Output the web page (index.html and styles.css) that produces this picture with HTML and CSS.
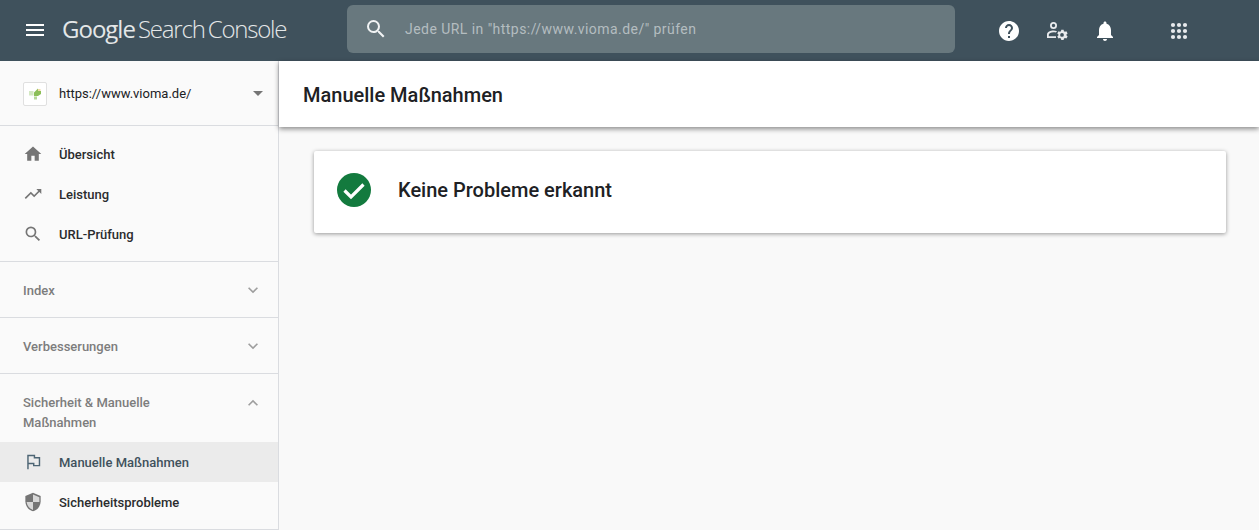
FILE: index.html
```html
<!DOCTYPE html>
<html lang="de">
<head>
<meta charset="utf-8">
<title>Manuelle Maßnahmen</title>
<link rel="stylesheet" href="styles.css">
</head>
<body>
<header class="topbar">
  <div class="brand">
    <svg class="menu" viewBox="0 0 24 24"><path d="M3 18h18v-2H3v2zm0-5h18v-2H3v2zm0-7v2h18V6H3z"/></svg>
    <div class="logo"><span class="logo-g">Google</span> <span class="logo-s">Search</span> <span class="logo-c">Console</span></div>
  </div>
  <div class="search">
    <svg class="search-icon" viewBox="0 0 24 24"><path d="M15.5 14h-.79l-.28-.27A6.47 6.47 0 0 0 16 9.5 6.5 6.5 0 1 0 9.5 16c1.61 0 3.09-.59 4.23-1.57l.27.28v.79l5 4.99L20.49 19l-4.99-5zm-6 0C7.01 14 5 11.99 5 9.5S7.01 5 9.5 5 14 7.01 14 9.5 11.99 14 9.5 14z"/></svg>
    <span class="search-text">Jede URL in "https://www.vioma.de/" prüfen</span>
  </div>
  <div class="actions">
    <svg class="act" viewBox="0 0 24 24"><path d="M12 2C6.48 2 2 6.48 2 12s4.48 10 10 10 10-4.48 10-10S17.52 2 12 2zm1 17h-2v-2h2v2zm2.07-7.75l-.9.92C13.45 12.9 13 13.5 13 15h-2v-.5c0-1.1.45-2.1 1.17-2.83l1.24-1.26c.37-.36.59-.86.59-1.41 0-1.1-.9-2-2-2s-2 .9-2 2H8c0-2.21 1.79-4 4-4s4 1.79 4 4c0 .88-.36 1.68-.93 2.25z"/></svg>
    <svg class="act act-dim" viewBox="0 0 24 24"><g transform="translate(-2 -1)"><path d="M10.5 4a3.500 3.500 0 1 0 0 7 3.500 3.500 0 0 0 0-7zm0 1.800a1.700 1.700 0 1 1 0 3.400 1.700 1.700 0 0 1 0-3.400zM10.500 12.500c-2.900 0-6.500 1.300-6.500 4V20h9v-1.800H5.800v-1.700c0-1 2.200-2.200 4.700-2.200.7 0 1.500.1 2.200.3l1.400-1.400c-1.300-.5-2.600-.7-3.600-.7z"/></g><g transform="translate(-5.500 -5.500) scale(1.250)"><path d="M21.600 16.600l.9-.7-1-1.700-1.100.4c-.3-.2-.5-.4-.9-.5l-.2-1.100h-1.900l-.2 1.100c-.3.1-.6.3-.9.5l-1.100-.4-1 1.700.9.700v1l-.9.7 1 1.700 1.100-.4c.3.2.6.4.9.5l.2 1.100h1.900l.2-1.100c.4-.1.6-.3.9-.5l1.100.4 1-1.700-.9-.7c.1-.3.1-.7 0-1zM18 18.600a1.500 1.500 0 1 1 0-3 1.500 1.500 0 0 1 0 3z"/></g></svg>
    <svg class="act" viewBox="0 0 24 24"><path d="M12 22c1.100 0 2-.9 2-2h-4c0 1.100.9 2 2 2zm6-6v-5c0-3.070-1.630-5.640-4.500-6.320V4c0-.83-.67-1.500-1.500-1.500s-1.500.67-1.500 1.500v.68C7.640 5.360 6 7.920 6 11v5l-2 2v1h16v-1l-2-2z"/></svg>
    <svg class="act act-apps act-dim" viewBox="0 0 24 24"><circle cx="6" cy="6" r="2.100"/><circle cx="12" cy="6" r="2.100"/><circle cx="18" cy="6" r="2.100"/><circle cx="6" cy="12" r="2.100"/><circle cx="12" cy="12" r="2.100"/><circle cx="18" cy="12" r="2.100"/><circle cx="6" cy="18" r="2.100"/><circle cx="12" cy="18" r="2.100"/><circle cx="18" cy="18" r="2.100"/></svg>
  </div>
</header>
<div class="layout">
  <aside class="sidebar">
    <div class="site">
      <div class="favicon">
        <svg viewBox="0 0 22 22"><rect x="5" y="8" width="4.500" height="4.500" fill="#d3e8c2"/><path d="M10 13V9.500L14 5.500V8h3v3l-3 2z" fill="#8cbf58"/><rect x="14" y="6" width="2.500" height="2" fill="#f2dca8"/><rect x="10" y="13.500" width="3" height="3" fill="#b7d99a"/></svg>
      </div>
      <span class="site-url">https://www.vioma.de/</span>
      <span class="caret"></span>
    </div>
    <nav class="group group-top">
      <a class="item"><svg class="icon" viewBox="0 0 24 24"><path d="M10 20v-6h4v6h5v-8h3L12 3 2 12h3v8z"/></svg><span>Übersicht</span></a>
      <a class="item"><svg class="icon" viewBox="0 0 24 24"><path d="M16 6l2.290 2.290-4.880 4.880-4-4L2 16.590 3.410 18l6-6 4 4 6.300-6.290L22 12V6z"/></svg><span>Leistung</span></a>
      <a class="item"><svg class="icon" viewBox="0 0 24 24"><path d="M15.500 14h-.79l-.28-.27A6.470 6.470 0 0 0 16 9.500 6.500 6.500 0 1 0 9.500 16c1.610 0 3.090-.59 4.230-1.570l.27.28v.79l5 4.990L20.490 19l-4.990-5zm-6 0C7.010 14 5 11.990 5 9.500S7.010 5 9.500 5 14 7.010 14 9.500 11.990 14 9.500 14z"/></svg><span>URL-Prüfung</span></a>
    </nav>
    <div class="group head-row">
      <span class="head-label">Index</span>
      <svg class="chev" viewBox="0 0 24 24"><path d="M7.410 8.590L12 13.170l4.590-4.580L18 10l-6 6-6-6z"/></svg>
    </div>
    <div class="group head-row">
      <span class="head-label">Verbesserungen</span>
      <svg class="chev" viewBox="0 0 24 24"><path d="M7.410 8.590L12 13.170l4.590-4.580L18 10l-6 6-6-6z"/></svg>
    </div>
    <div class="group group-open">
      <div class="head-open">
        <span class="head-label head-wrap">Sicherheit &amp; Manuelle Maßnahmen</span>
        <svg class="chev" viewBox="0 0 24 24"><path d="M12 8l-6 6 1.410 1.410L12 10.830l4.590 4.580L18 14z"/></svg>
      </div>
      <a class="item active"><svg class="icon icon-flag" viewBox="0 0 24 24"><path d="M5 22V3h9v3h7v11h-8v-3H5"/></svg><span>Manuelle Maßnahmen</span></a>
      <a class="item"><svg class="icon icon-shield" viewBox="0 0 24 24"><path d="M12 1L3 5v6c0 5.550 3.840 10.740 9 12 5.160-1.260 9-6.450 9-12V5z"/><path class="shield-light" d="M12 3.100V12h7.500V6.300zM12 12v9.300C8 20 5.100 16.400 4.500 12z"/></svg><span>Sicherheitsprobleme</span></a>
    </div>
  </aside>
  <main class="main">
    <div class="page-head"><h1 class="page-title">Manuelle Maßnahmen</h1></div>
    <section class="card">
      <svg class="ok" viewBox="0 0 34 34"><circle cx="17" cy="17" r="17" fill="#137a3e"/><path d="M7.500 17.500l6.500 6.500L26.500 11.500" fill="none" stroke="#fff" stroke-width="3.200"/></svg>
      <h2 class="card-title">Keine Probleme erkannt</h2>
    </section>
  </main>
</div>
</body>
</html>
```

FILE: styles.css
```css
* { box-sizing: border-box; }
html, body { height: 100%; }
body {
  margin: 0;
  height: 530px;
  overflow: hidden;
  background: #f9f9f9;
  font-family: Roboto, "Liberation Sans", sans-serif;
  color: #202124;
}
.topbar {
  height: 61px;
  background: #3f515c;
  display: flex;
  align-items: center;
}
.brand {
  width: 347px;
  display: flex;
  align-items: center;
  padding-left: 23px;
  padding-bottom: 4px;
  flex: none;
}
.menu { width: 24px; height: 24px; fill: #fff; flex: none; margin-top: 3px; }
.logo {
  margin-left: 15px;
  color: #e4e7e8;
  font-family: "Open Sans", sans-serif;
  font-size: 24px;
  letter-spacing: -1.2px;
  word-spacing: -2px;
  white-space: nowrap;
  font-weight: 400;
}
.logo-g { font-size: 24px; letter-spacing: -1px; }
.logo-s, .logo-c { font-weight: 300; }
.search {
  width: 608px;
  height: 48px;
  margin-bottom: 4px;
  background: #68787e;
  border-radius: 6px;
  display: flex;
  align-items: center;
  padding-left: 17px;
  flex: none;
}
.search-icon { width: 24px; height: 24px; fill: #f1f3f4; flex: none; }
.search-text {
  margin-left: 17px;
  color: #b4bdc0;
  font-size: 14px;
  letter-spacing: .45px;
}
.actions {
  display: flex;
  align-items: center;
  margin-left: 42px;
}
.act { width: 24px; height: 24px; fill: #fff; margin-right: 24px; flex: none; }
.act-dim { fill: #e8eaed; }
.act-apps { margin-left: 26px; }
.layout { display: flex; height: 469px; }
.sidebar {
  width: 279px;
  flex: none;
  border-right: 1px solid #dadce0;
  background: #fafafa;
}
.site {
  height: 65px;
  display: flex;
  align-items: center;
  padding: 1px 15px 0 23px;
  border-bottom: 1px solid #dadce0;
}
.favicon {
  width: 24px;
  height: 24px;
  background: #fff;
  border: 1px solid #e0e0e0;
  border-radius: 2px;
  flex: none;
}
.favicon svg { width: 22px; height: 22px; display: block; }
.site-url {
  margin-left: 12px;
  font-size: 13px;
  color: #202124;
  flex: 1;
}
.caret {
  width: 0;
  height: 0;
  border-left: 5px solid transparent;
  border-right: 5px solid transparent;
  border-top: 5px solid #757575;
}
.group { border-bottom: 1px solid #dadce0; }
.group-top { padding: 8px 0 7px; }
.item {
  height: 40px;
  display: flex;
  align-items: center;
  padding-left: 21px;
  font-size: 13px;
  font-weight: 500;
  color: #2b2c2e;
}
.item span { margin-left: 14px; }
.icon { width: 24px; height: 24px; fill: #757575; flex: none; transform: scale(.83); }
.item.active { background: #ebebeb; color: #3f515c; }
.icon-flag { fill: none; stroke: #4d6574; stroke-width: 2; transform: scale(.72); }
.icon-shield { transform: scale(.85); }
.shield-light { fill: #d8d8d8; }
.head-row {
  height: 56px;
  display: flex;
  align-items: center;
  justify-content: space-between;
  padding: 2px 15px 0 23px;
}
.head-label {
  font-size: 13px;
  font-weight: 500;
  color: #7d7d7d;
  line-height: 20px;
}
.chev { width: 20px; height: 20px; fill: #9e9e9e; flex: none; }
.head-row .chev { margin-top: -2px; }
.group-open { height: 156px; }
.head-open {
  height: 68px;
  display: flex;
  justify-content: space-between;
  align-items: flex-start;
  padding: 19px 15px 0 23px;
}
.head-wrap { width: 160px; }
.main { flex: 1; min-width: 0; }
.page-head {
  height: 66px;
  background: #fff;
  display: flex;
  align-items: center;
  padding: 2px 0 0 24px;
  box-shadow: 0 2px 5px rgba(0, 0, 0, .45);
}
.page-title {
  margin: 0;
  font-size: 20px;
  font-weight: 500;
  color: #202124;
}
.card {
  margin: 24px 33px 0 35px;
  height: 82px;
  background: #fff;
  border-radius: 2px;
  box-shadow: 0 1px 4px rgba(0, 0, 0, .4);
  display: flex;
  align-items: center;
  padding: 0 0 4px 23px;
}
.ok { width: 34px; height: 34px; flex: none; }
.card-title {
  margin: 0 0 0 27px;
  font-size: 20px;
  font-weight: 500;
  color: #202124;
}
```
